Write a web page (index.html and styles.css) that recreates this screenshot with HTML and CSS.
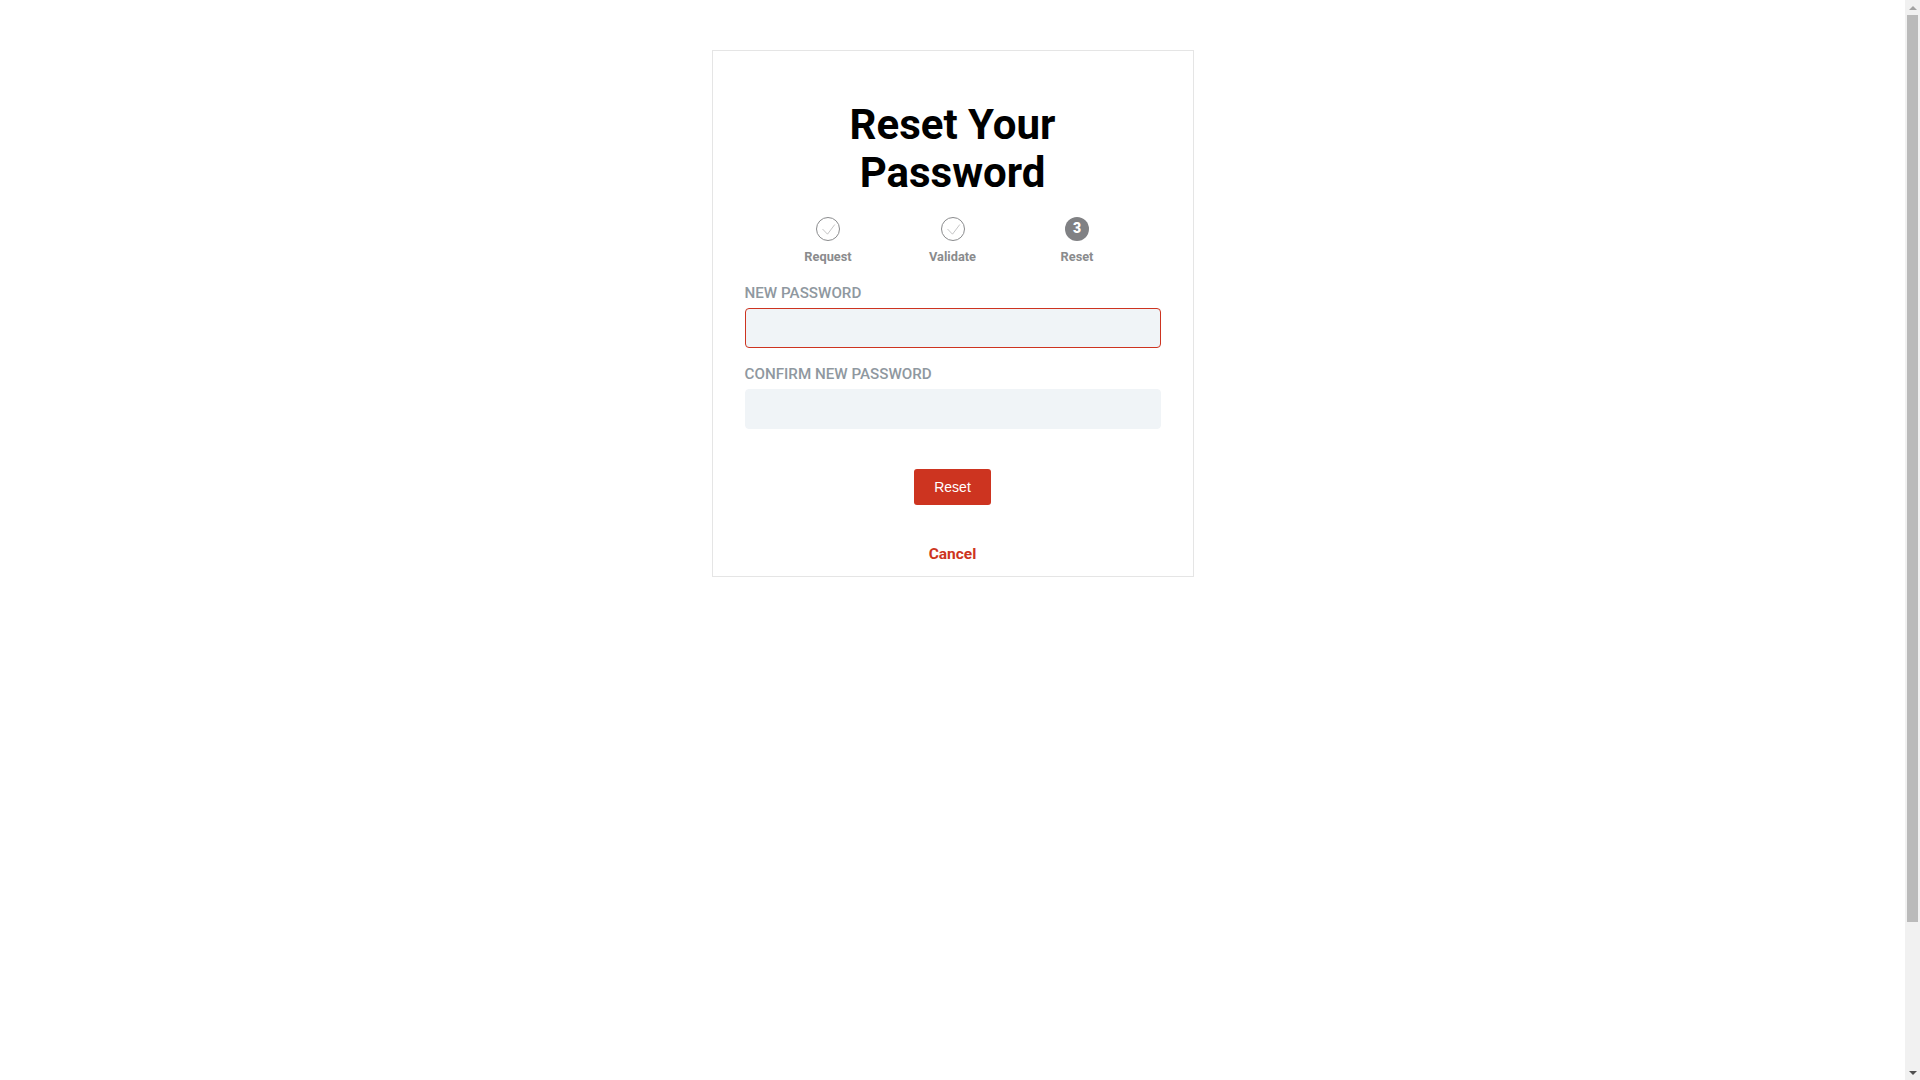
FILE: index.html
```html
<!DOCTYPE html>
<html lang="en">
<head>
  <meta charset="UTF-8">
  <title>Reset Your Password</title>
  <link rel="stylesheet" href="styles.css">
</head>
<body>
  <div class="page">
    <div class="card">
      <h1 class="title">Reset Your<br>Password</h1>

      <ol class="steps">
        <li class="step">
          <span class="step-icon">
            <svg width="24" height="24" viewBox="0 0 24 24" fill="none" stroke="currentColor" stroke-width="0.5">
              <path d="M6.5 12l5 5.2L18.8 7.5" />
            </svg>
          </span>
          <span class="step-label">Request</span>
        </li>
        <li class="step">
          <span class="step-icon">
            <svg width="24" height="24" viewBox="0 0 24 24" fill="none" stroke="currentColor" stroke-width="0.5">
              <path d="M6.5 12l5 5.2L18.8 7.5" />
            </svg>
          </span>
          <span class="step-label">Validate</span>
        </li>
        <li class="step">
          <span class="step-icon step-current">3</span>
          <span class="step-label">Reset</span>
        </li>
      </ol>

      <form class="form">
        <div class="field">
          <label class="field-label" for="newPassword">New Password</label>
          <input class="input input-error" id="newPassword" type="password">
        </div>
        <div class="field">
          <label class="field-label" for="confirmPassword">Confirm New Password</label>
          <input class="input" id="confirmPassword" type="password">
        </div>
        <button class="btn" type="button">Reset</button>
        <a class="cancel" href="#">Cancel</a>
      </form>
    </div>
  </div>

  <div class="scrollbar" aria-hidden="true">
    <div class="scroll-btn"><span class="arrow-up"></span></div>
    <div class="scroll-thumb"></div>
    <div class="scroll-track"></div>
    <div class="scroll-btn"><span class="arrow-down"></span></div>
  </div>
</body>
</html>
```

FILE: styles.css
```css
* {
  margin: 0;
  padding: 0;
  box-sizing: border-box;
}

body {
  display: flex;
  height: 100vh;
  overflow: hidden;
  font-family: Roboto, "Liberation Sans", sans-serif;
  background-color: #fff;
  color: #000;
}

.page {
  flex: 1;
  padding-top: 50px;
}

.card {
  width: 482px;
  height: 527px;
  margin: 0 auto;
  padding: 50px 32px 0;
  border: 1px solid #e5e5e5;
}

.title {
  font-size: 42px;
  font-weight: 700;
  line-height: 48px;
  text-align: center;
}

/* Steps */
.steps {
  display: grid;
  grid-template-columns: repeat(3, 124.5px);
  justify-content: center;
  margin-top: 20px;
  list-style: none;
}

.step {
  display: flex;
  flex-direction: column;
  align-items: center;
}

.step-icon {
  display: flex;
  align-items: center;
  justify-content: center;
  width: 24px;
  height: 24px;
  border: 1px solid #8a8b8d;
  border-radius: 50%;
  color: #8a8b8d;
}

.step-icon svg {
  flex: none;
}

.step-current {
  background-color: #808184;
  border: none;
  color: #fff;
  font-size: 14px;
  font-weight: 900;
  padding-bottom: 2px;
}

.step-label {
  margin-top: 7px;
  font-size: 12.8px;
  font-weight: 700;
  line-height: 18px;
  color: #8a8b8d;
}

/* Form */
.form {
  display: flex;
  flex-direction: column;
  margin-top: 17px;
}

.field {
  margin-bottom: 16px;
}

.field-label {
  display: block;
  margin-bottom: 5px;
  font-size: 15.2px;
  font-weight: 500;
  line-height: 20px;
  text-transform: uppercase;
  color: #8f98a0;
}

.input {
  display: block;
  width: 100%;
  height: 40px;
  padding: 0 12px;
  background-color: #f0f4f7;
  border: 1px solid #f0f4f7;
  border-radius: 4px;
  outline: none;
}

.input-error {
  border-color: #cd3420;
}

.btn {
  align-self: center;
  width: 77px;
  height: 36px;
  margin-top: 24px;
  background-color: #cd3420;
  border: none;
  border-radius: 3px;
  font-family: "Liberation Sans", sans-serif;
  font-size: 14px;
  color: #fff;
}

.cancel {
  align-self: center;
  margin-top: 39px;
  font-size: 15.5px;
  font-weight: 700;
  line-height: 20px;
  color: #cd3420;
  text-decoration: none;
}

/* Scrollbar */
.scrollbar {
  display: flex;
  flex-direction: column;
  flex: none;
  width: 15px;
  background-color: #f1f1f1;
}

.scroll-btn {
  display: flex;
  align-items: center;
  justify-content: center;
  flex: none;
  height: 15px;
}

.arrow-up {
  border-left: 4px solid transparent;
  border-right: 4px solid transparent;
  border-bottom: 4px solid #a3a3a3;
}

.arrow-down {
  border-left: 4px solid transparent;
  border-right: 4px solid transparent;
  border-top: 4px solid #505050;
}

.scroll-thumb {
  flex: none;
  height: 907px;
  margin: 0 2px;
  background-color: #bababa;
}

.scroll-track {
  flex: 1;
}
```
